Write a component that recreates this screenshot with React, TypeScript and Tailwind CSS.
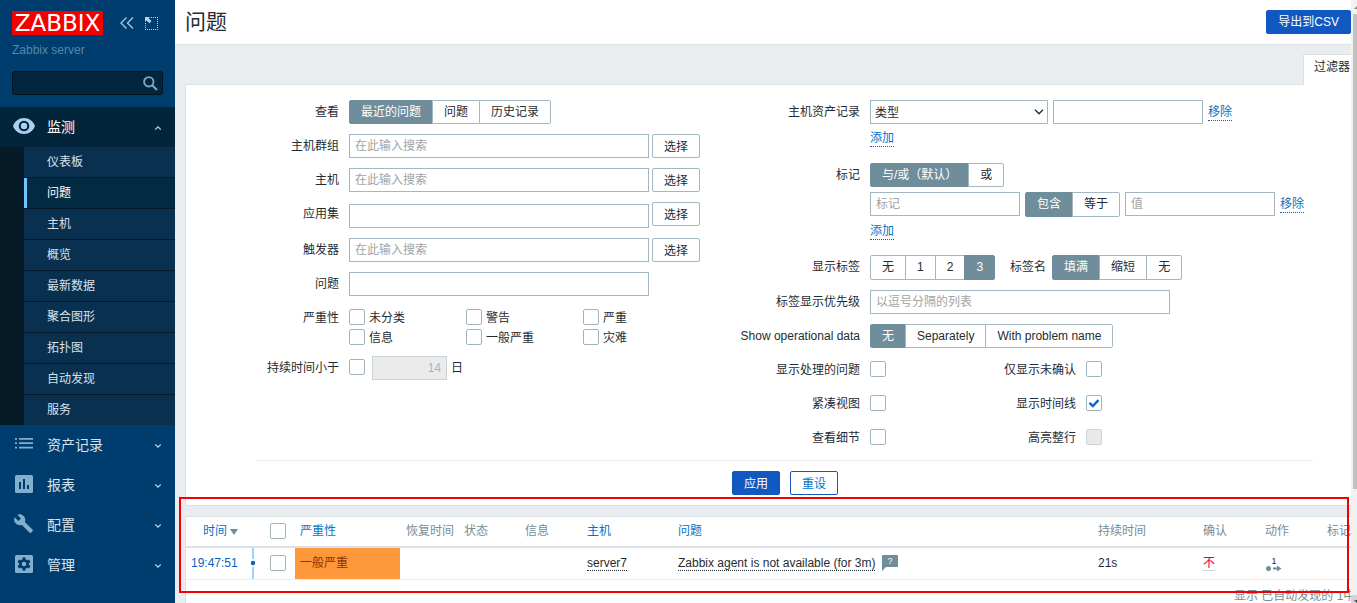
import React from "react";

const FONT = "font-['Liberation_Sans','Noto_Sans_CJK_SC',sans-serif]";

function SegmentedControl({ name, options, selected, tall }: { name: string; options: string[]; selected: number; tall?: boolean }) {
  return (
    <div role="radiogroup" aria-label={name} className={`flex ${tall ? "h-[25px]" : "h-6"}`}>
      {options.map((option, i) => (
        <label
          key={i}
          className="relative -ml-px flex cursor-pointer items-start border border-[#a3b7c0] px-[11px] leading-[22px] whitespace-nowrap first:ml-0 first:rounded-l-[2px] last:rounded-r-[2px] has-checked:border-[#6f8d9a] has-checked:bg-[#6f8d9a] has-checked:text-white"
        >
          <input type="radio" name={name} defaultChecked={i === selected} className="sr-only" />
          {option}
        </label>
      ))}
    </div>
  );
}

function Checkbox({ id, label, checked, disabled }: { id: string; label?: string; checked?: boolean; disabled?: boolean }) {
  return (
    <span className="mt-[3px] grid size-4 shrink-0">
      <input
        id={id}
        type="checkbox"
        aria-label={label}
        defaultChecked={checked}
        disabled={disabled}
        className="peer col-start-1 row-start-1 size-4 appearance-none rounded-[2px] border border-[#a0b4be] bg-white disabled:border-[#ccd5d9] disabled:bg-[#e9e9e9]"
      />
      <svg viewBox="0 0 16 16" className="pointer-events-none invisible col-start-1 row-start-1 size-4 peer-checked:visible">
        <path d="M3.500 7.800 6.800 11l5.700-5.800" fill="none" stroke="#0a66c7" strokeWidth="2.400" />
      </svg>
    </span>
  );
}

const inputClass = "h-6 border border-[#a3b7c0] bg-white px-[5px] text-[#1f2c33] placeholder:text-[#a0a4a6] outline-none";
const linkClass = "border-b border-dotted border-[#0a5fc0] leading-4 text-[#0275c8]";

function Row({ label, htmlFor, wide, children }: { label: string; htmlFor?: string; wide?: boolean; children: React.ReactNode }) {
  return (
    <div className="flex items-start gap-[10px] py-[5px]">
      <label htmlFor={htmlFor} className={`shrink-0 text-right leading-6 whitespace-nowrap ${wide ? "w-[130px]" : "w-[82px]"}`}>
        {label}
      </label>
      {children}
    </div>
  );
}

function MultiSelect({ id, label, placeholder, offset }: { id: string; label: string; placeholder?: string; offset?: boolean }) {
  return (
    <Row label={label} htmlFor={id}>
      <div className="flex items-start gap-[3px]">
        <div className={offset ? "flex pt-[2px]" : "flex"}>
          <input id={id} placeholder={placeholder} className={`${inputClass} w-[300px]`} />
        </div>
        <button type="button" className="h-6 rounded-[2px] border border-[#a3b7c0] px-[11px] pt-[2px] leading-5">选择</button>
      </div>
    </Row>
  );
}

function Chevron({ up }: { up?: boolean }) {
  return (
    <svg viewBox="0 0 8 6" className="mt-[2px] ml-auto h-[6px] w-2">
      <path d={up ? "M1.200 4.600 4 1.800l2.800 2.800" : "M1.200 1.400 4 4.200l2.800-2.800"} fill="none" stroke="#c5d9e8" strokeWidth="1.200" />
    </svg>
  );
}

const icons: Record<string, React.ReactNode> = {
  inventory: <path d="M0 3h2v1.800H0zM4 3h14v1.800H4zM0 7.300h2v1.800H0zM4 7.300h14v1.800H4zM0 11.700h2v1.800H0zM4 11.700h14v1.800H4z" />,
  reports: <path fillRule="evenodd" d="M1.500 0h15Q18 0 18 1.500v15Q18 18 16.500 18h-15Q0 18 0 16.500v-15Q0 0 1.500 0zM4 7v7h2V7zM8 4v10h2V4zM12 10v4h2v-4z" />,
  config: <path d="M17.700 14.700 9.900 6.900c.8-2 .4-4.300-1.300-6C6.900-.8 4.300-1.100 2.300-.2L5.900 3.400 3.400 5.900-.3 2.300c-1 2-.6 4.600 1.200 6.300 1.700 1.700 4 2.100 6 1.300l7.800 7.800c.3.300.9.300 1.200 0l1.900-1.900c.4-.3.4-.9-.1-1.100z" />,
  admin: (
    <path
      fillRule="evenodd"
      d="M1.500 0h15Q18 0 18 1.500v15Q18 18 16.500 18h-15Q0 18 0 16.500v-15Q0 0 1.500 0zM7.500 2.500 7.200 4.500 5.900 5.200 4 4.500 2.500 7l1.600 1.300v1.400L2.500 11 4 13.500l1.900-.7 1.300.7.3 2h3l.3-2 1.300-.7 1.900.7 1.500-2.500-1.600-1.300V8.300L15.500 7 14 4.500l-1.900.7-1.300-.7-.3-2zM9 6.700a2.300 2.300 0 1 1 0 4.600 2.300 2.300 0 0 1 0-4.600z"
    />
  ),
};

function MenuSection({ icon, title }: { icon: string; title: string }) {
  return (
    <a href="#" className="flex h-10 items-center pr-[13px] pl-[15px] text-sm text-[#d5e3ee]">
      <svg viewBox="0 0 18 18" className="mr-[14px] mb-[2px] size-[18px] overflow-visible fill-[#83afcf]">
        {icons[icon]}
      </svg>
      {title}
      <Chevron />
    </a>
  );
}

const monitoring = ["仪表板", "问题", "主机", "概览", "最新数据", "聚合图形", "拓扑图", "自动发现", "服务"];

function Sidebar() {
  return (
    <aside className="flex w-[175px] shrink-0 flex-col bg-[#003d6f]">
      <div className="px-3 pt-[11px]">
        <div className="flex items-center">
          <a href="#" className="flex h-6 w-[91px] justify-center bg-[#f50000] font-['DejaVu_Sans',sans-serif] text-[23px] leading-6 text-white">
            ZABBIX
          </a>
          <button aria-label="收起" className="ml-[17px]">
            <svg viewBox="0 0 14 12" className="h-3 w-[14px]">
              <path d="M6.500.5 1 6l5.500 5.500M13 .5 7.500 6l5.500 5.500" fill="none" stroke="#a5c6de" strokeWidth="1.400" />
            </svg>
          </button>
          <button aria-label="隐藏" className="ml-[11px]">
            <svg viewBox="0 0 13 13" className="size-[13px]">
              <path d="M6 .5h7M.5 6v7M12.500 2v11M2 12.500h11" fill="none" stroke="#b9d3e6" strokeDasharray="1 1" />
              <path d="M0 0h5L3.700 1.300 6.500 4 4.500 6.200 1.500 3.500 0 5z" fill="#b9d3e6" />
            </svg>
          </button>
        </div>
        <div className="mt-[7px] leading-4 text-[#5487ab]">Zabbix server</div>
        <div className="mt-[13px] flex h-6 items-center rounded-[3px] border border-[#021521] bg-[#03263d] pr-1">
          <input aria-label="搜索" className="w-full min-w-0 bg-transparent px-1 text-white outline-none" />
          <svg viewBox="0 0 15 15" className="size-[15px] shrink-0">
            <circle cx="5.800" cy="5.800" r="4.700" fill="none" stroke="#7da4c0" strokeWidth="1.900" />
            <path d="m9 9 5 5" stroke="#7da4c0" strokeWidth="2.200" />
          </svg>
        </div>
      </div>
      <nav className="mt-3">
        <a href="#" className="flex h-10 items-center bg-[#02253b] pr-[13px] pl-[13px] text-sm text-white">
          <svg viewBox="0 0 22 16" className="mr-3 mb-[2px] h-4 w-[22px]">
            <path fillRule="evenodd" fill="#abd1ef" d="M11 0C6 0 1.800 3.200 0 8c1.800 4.800 6 8 11 8s9.200-3.200 11-8c-1.800-4.800-6-8-11-8zm0 2.700a5.300 5.300 0 1 1 0 10.600 5.300 5.300 0 0 1 0-10.600z" />
            <circle cx="11" cy="8" r="3.200" fill="#abd1ef" />
          </svg>
          监测
          <Chevron up />
        </a>
        <ul className="bg-[#071a27] pl-6 text-[#d7e2ea]">
          {monitoring.map((item, i) => (
            <li key={item} className="border-b border-[#051b2b] last:border-b-0">
              <a
                href="#"
                className={`block h-[30px] border-l-[3px] pl-5 leading-[30px] ${i === 1 ? "border-[#70c5ff] bg-[#032a43] text-white" : "border-[#0a3050] bg-[#0a3050]"}`}
              >
                {item}
              </a>
            </li>
          ))}
        </ul>
        <MenuSection icon="inventory" title="资产记录" />
        <MenuSection icon="reports" title="报表" />
        <MenuSection icon="config" title="配置" />
        <MenuSection icon="admin" title="管理" />
      </nav>
    </aside>
  );
}

const severities = ["未分类", "警告", "严重", "信息", "一般严重", "灾难"];

const toggles = [
  ["显示处理的问题", "仅显示未确认"],
  ["紧凑视图", "显示时间线"],
  ["查看细节", "高亮整行"],
];

function Filter() {
  return (
    <form className="border border-[#dae2e5] bg-white py-[10px]">
      <div className="flex justify-center">
        <div className="w-[473px]">
          <Row label="查看">
            <SegmentedControl name="查看" options={["最近的问题", "问题", "历史记录"]} selected={0} />
          </Row>
          <MultiSelect id="groups" label="主机群组" placeholder="在此输入搜索" />
          <MultiSelect id="hosts" label="主机" placeholder="在此输入搜索" />
          <MultiSelect id="application" label="应用集" offset />
          <MultiSelect id="triggers" label="触发器" placeholder="在此输入搜索" />
          <Row label="问题" htmlFor="problem">
            <input id="problem" className={`${inputClass} w-[300px]`} />
          </Row>
          <Row label="严重性">
            <div className="grid grid-cols-[117px_117px_117px]">
              {severities.map((s, i) => (
                <div key={s} className="flex h-5 gap-1">
                  <Checkbox id={`severity-${i}`} />
                  <label htmlFor={`severity-${i}`} className="leading-6">{s}</label>
                </div>
              ))}
            </div>
          </Row>
          <Row label="持续时间小于" htmlFor="age-on">
            <div className="flex">
              <Checkbox id="age-on" />
              <input aria-label="天数" disabled defaultValue="14" className="mr-1 ml-[7px] h-6 w-[75px] border border-[#c6d2d7] bg-[#ebebeb] px-[5px] text-right text-[#a3b7c0]" />
              <span className="leading-6">日</span>
            </div>
          </Row>
        </div>
        <div className="w-[583px]">
          <Row wide label="主机资产记录" htmlFor="inventory">
            <div className="pb-[5px]">
              <div className="flex items-center gap-[5px]">
                <span className="grid w-[178px] items-center">
                  <select id="inventory" className="col-start-1 row-start-1 h-6 w-full appearance-none border border-[#a3b7c0] bg-white px-1 pt-[2px] text-[#1f2c33]">
                    <option>类型</option>
                  </select>
                  <svg viewBox="0 0 10 6" className="pointer-events-none col-start-1 row-start-1 mr-1 h-[6px] w-[10px] justify-self-end">
                    <path d="M1 .8 5 4.800 9 .8" fill="none" stroke="#1f2c33" strokeWidth="1.400" />
                  </svg>
                </span>
                <input aria-label="资产值" className={`${inputClass} w-[150px]`} />
                <a href="#" className={linkClass}>移除</a>
              </div>
              <div className="mt-1 flex h-5 items-center">
                <a href="#" className={linkClass}>添加</a>
              </div>
            </div>
          </Row>
          <Row wide label="标记">
            <div className="pb-1">
              <SegmentedControl name="标记" options={["与/或（默认）", "或"]} selected={0} />
              <div className="mt-[5px] flex items-start gap-[5px]">
                <input aria-label="标记" placeholder="标记" className={`${inputClass} w-[150px]`} />
                <SegmentedControl name="标记条件" options={["包含", "等于"]} selected={0} tall />
                <input aria-label="值" placeholder="值" className={`${inputClass} w-[150px]`} />
                <div className="flex h-6 items-center">
                  <a href="#" className={linkClass}>移除</a>
                </div>
              </div>
              <div className="mt-1 flex h-5 items-center">
                <a href="#" className={linkClass}>添加</a>
              </div>
            </div>
          </Row>
          <Row wide label="显示标签">
            <div className="flex">
              <SegmentedControl name="显示标签" options={["无", "1", "2", "3"]} selected={3} tall />
              <span className="mr-[6px] ml-[15px] leading-6">标签名</span>
              <SegmentedControl name="标签名" options={["填满", "缩短", "无"]} selected={0} tall />
            </div>
          </Row>
          <Row wide label="标签显示优先级" htmlFor="priority">
            <input id="priority" placeholder="以逗号分隔的列表" className={`${inputClass} w-[300px]`} />
          </Row>
          <Row wide label="Show operational data">
            <SegmentedControl name="Show operational data" options={["无", "Separately", "With problem name"]} selected={0} />
          </Row>
          {toggles.map(([left, right], i) => (
            <Row key={left} wide label={left} htmlFor={`left-${i}`}>
              <div className="flex h-6">
                <Checkbox id={`left-${i}`} />
                <label htmlFor={`right-${i}`} className="mr-[10px] w-[190px] text-right leading-6">{right}</label>
                <Checkbox id={`right-${i}`} checked={i === 1} disabled={i === 2} />
              </div>
            </Row>
          ))}
        </div>
      </div>
      <div className="mx-auto mt-[5px] flex w-[1056px] justify-center gap-[10px] border-t border-[#e6eaec] pt-[10px]">
        <button type="button" className="h-6 rounded-[2px] border border-[#1159c0] bg-[#1159c0] px-[11px] pt-[2px] leading-5 text-white">应用</button>
        <button type="reset" className="h-6 rounded-[2px] border border-[#1159c0] bg-white px-[11px] pt-[2px] leading-5 text-[#0275c8]">重设</button>
      </div>
    </form>
  );
}

function ProblemTable() {
  const head = "h-[30px] p-0 pb-[2px] text-left font-normal";
  const cell = "h-[31px] p-0 pb-px";
  return (
    <div className="mt-[10px] h-[120px] border border-[#dae2e5] bg-white">
      <table className="w-full table-fixed border-collapse text-[#768d99]">
        <colgroup>
          <col className="w-[56px]" />
          <col className="w-[28px]" />
          <col className="w-[25px]" />
          <col className="w-[105px]" />
          <col className="w-[64px]" />
          <col className="w-[61px]" />
          <col className="w-[62px]" />
          <col className="w-[91px]" />
          <col />
          <col className="w-[105px]" />
          <col className="w-[62px]" />
          <col className="w-[62px]" />
          <col className="w-[57px]" />
        </colgroup>
        <thead>
          <tr className="border-b-2 border-[#dce2e5]">
            <th className={head}>
              <a href="#" className="flex items-center gap-[3px] pl-[17px] whitespace-nowrap text-[#0275c8]">
                时间
                <svg viewBox="0 0 8 6" className="mt-[2px] h-[6px] w-2 shrink-0 fill-[#6f8d9a]"><path d="M0 0h8L4 6z" /></svg>
              </a>
            </th>
            <th className={head} />
            <th className={head}><div className="-mt-[3px]"><Checkbox id="all" label="全选" /></div></th>
            <th className={`${head} text-[#0275c8]`}><a href="#" className="pl-[5px]">严重性</a></th>
            <th className={`${head} pl-[6px]`}>恢复时间</th>
            <th className={head}>状态</th>
            <th className={head}>信息</th>
            <th className={`${head} text-[#0275c8]`}><a href="#">主机</a></th>
            <th className={`${head} text-[#0275c8]`}><a href="#">问题</a></th>
            <th className={head}>持续时间</th>
            <th className={head}>确认</th>
            <th className={head}>动作</th>
            <th className={head}>标记</th>
          </tr>
        </thead>
        <tbody className="text-[#1f2c33]">
          <tr className="border-b border-[#ebeef0]">
            <td className={`${cell} pl-[5px]`}><a href="#" className="text-[#0a5fc0]">19:47:51</a></td>
            <td className="p-0">
              <svg viewBox="0 0 6 31" className="ml-2 block h-[31px] w-[6px]">
                <path d="M2 0h2v11H2zM2 19h2v12H2z" fill="#9dd4f5" />
                <circle cx="3" cy="15" r="2.200" fill="#0a5fc0" />
              </svg>
            </td>
            <td className={cell}><div className="-mt-[3px]"><Checkbox id="row" label="选择问题" /></div></td>
            <td className={`${cell} bg-[#ff983b] pl-[5px] text-[#8a3200]`}>一般严重</td>
            <td className={cell} />
            <td className={cell} />
            <td className={cell} />
            <td className={cell}><a href="#" className="border-b border-dotted border-[#1f2c33]">server7</a></td>
            <td className={cell}>
              <div className="flex items-center gap-[7px]">
                <a href="#" className="border-b border-dotted border-[#1f2c33] leading-[14px]">Zabbix agent is not available (for 3m)</a>
                <button aria-label="描述">
                  <svg viewBox="0 0 16 16" className="block size-4">
                    <path d="M1 0h14q1 0 1 1v10q0 1-1 1H4l-4 4V1q0-1 1-1z" fill="#6f8d9a" />
                    <text x="8" y="9" textAnchor="middle" fontSize="9" fill="#fff">?</text>
                  </svg>
                </button>
              </div>
            </td>
            <td className={cell}>21s</td>
            <td className={cell}><a href="#" className="border-b border-[#c9d6db] text-[#e8002f]">不</a></td>
            <td className={cell}>
              <button aria-label="动作" className="block">
                <svg viewBox="0 0 18 18" className="block size-[18px]">
                  <text x="9" y="10" textAnchor="middle" fontSize="9" fill="#1f2c33">1</text>
                  <circle cx="3.500" cy="14.500" r="2.500" fill="#6f8d9a" />
                  <path d="M8 13.500h4v-2l4.500 3-4.500 3v-2H8z" fill="#6f8d9a" />
                </svg>
              </button>
            </td>
            <td className={cell} />
          </tr>
        </tbody>
      </table>
      <p className="pt-[7px] pr-[10px] text-right leading-[18px] text-[#768d99]">显示 已自动发现的 1中的1</p>
    </div>
  );
}

function Scrollbar() {
  return (
    <div aria-hidden="true" className="flex w-[6px] shrink-0 flex-col bg-[#f1f1f1]">
      <svg viewBox="0 0 6 14" className="h-[14px] w-[6px] shrink-0"><path d="M3 9h3V6z" fill="#8a8a8a" /></svg>
      <div className="ml-[2px] flex-[475] bg-[#c1c1c1]" />
      <div className="flex-[106]" />
      <svg viewBox="0 0 6 8" className="h-2 w-[6px] shrink-0 bg-[#d2d2d2]"><path d="M3 5h3v3z" fill="#505050" /></svg>
    </div>
  );
}

export default function App() {
  return (
    <div className={`flex h-screen overflow-hidden bg-[#e9edf0] text-xs text-[#1f2c33] ${FONT}`}>
      <Sidebar />
      <main className="relative min-w-0 flex-1 overflow-hidden">
        <header className="flex h-[45px] items-center justify-between border-b border-[#dae2e5] bg-white pl-[10px]">
          <h1 className="text-[21px] leading-8">问题</h1>
          <button className="h-6 rounded-[2px] border border-[#1159c0] bg-[#1159c0] px-[11px] leading-[22px] text-white">导出到CSV</button>
        </header>
        <div className="min-w-[1200px] pt-[9px] pl-[10px]">
          <div className="w-[1200px]">
            <div className="flex justify-end">
              <button className="z-10 -mb-px flex h-[31px] w-[82px] border border-b-0 border-[#dae2e5] bg-white pl-[10px] leading-6">过滤器</button>
            </div>
            <Filter />
            <ProblemTable />
          </div>
        </div>
        <div className="pointer-events-none absolute top-[497px] right-[2px] left-1 h-24 border-2 border-[#f50000]" />
      </main>
      <Scrollbar />
    </div>
  );
}
